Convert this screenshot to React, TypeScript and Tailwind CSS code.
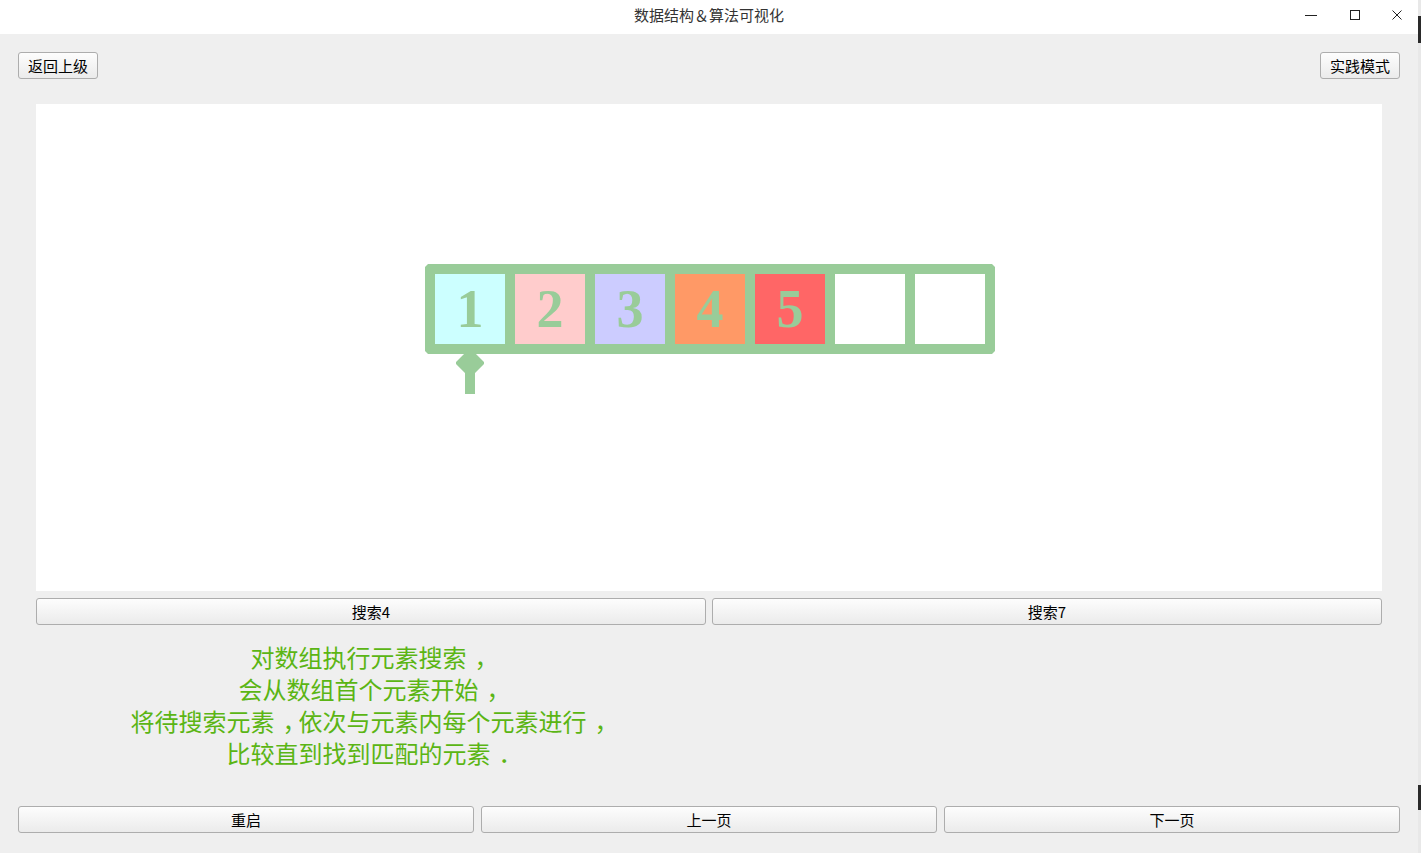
import React from "react";

const font = { fontFamily: '"Noto Sans CJK SC", "Noto Sans", sans-serif' };

function Btn({ children, className = "" }: { children: React.ReactNode; className?: string }) {
  return (
    <div
      className={
        "flex h-[27px] items-center justify-center rounded-[3px] border border-[#adadad] bg-gradient-to-b from-[#fdfdfd] to-[#ebebeb] pb-[1px] text-[15px] leading-none text-black " +
        className
      }
    >
      {children}
    </div>
  );
}

const cells = [
  { v: "1", bg: "bg-[#ccffff]" },
  { v: "2", bg: "bg-[#ffcccc]" },
  { v: "3", bg: "bg-[#ccccff]" },
  { v: "4", bg: "bg-[#ff9966]" },
  { v: "5", bg: "bg-[#ff6666]" },
  { v: "", bg: "bg-white" },
  { v: "", bg: "bg-white" },
];

function P({ c }: { c: string }) {
  return <span className="pl-[8px] pr-[4px] [font-feature-settings:'halt']">{c}</span>;
}

export default function App() {
  return (
    <div className="flex h-[853px] w-[1421px] overflow-hidden bg-[#efefef]" style={font}>
      <div className="flex h-[851px] w-[1418px] flex-col">
        {/* title bar */}
        <div className="relative flex h-[34px] items-center justify-center bg-white">
          <span className="pb-[4px] text-[15px] text-[#333]">数据结构＆算法可视化</span>
          <div className="absolute right-0 top-0 flex h-[30px] items-center">
            <div className="ml-[2px] flex w-[44px] justify-center">
              <svg width="12" height="12" viewBox="0 0 12 12">
                <line x1="0" y1="6.5" x2="12" y2="6.5" stroke="#222" strokeWidth="1" />
              </svg>
            </div>
            <div className="flex w-[43px] justify-center">
              <svg width="12" height="12" viewBox="0 0 12 12">
                <rect x="1.5" y="1.5" width="9" height="9" fill="none" stroke="#222" strokeWidth="1" />
              </svg>
            </div>
            <div className="flex w-[42px] justify-center">
              <svg width="12" height="12" viewBox="0 0 12 12">
                <line x1="1.5" y1="1.5" x2="10.5" y2="10.5" stroke="#222" strokeWidth="1" />
                <line x1="10.5" y1="1.5" x2="1.5" y2="10.5" stroke="#222" strokeWidth="1" />
              </svg>
            </div>
          </div>
        </div>

        {/* top buttons */}
        <div className="mt-[18px] flex justify-between pl-[18px] pr-[18px]">
          <Btn className="w-[80px]">返回上级</Btn>
          <Btn className="w-[80px]">实践模式</Btn>
        </div>

        {/* canvas */}
        <div className="mx-[36px] mt-[25px] h-[487px] bg-white pl-[389px] pt-[160px]">
          <div className="relative w-[570px]">
            <div
              className="flex gap-[10px] bg-[#99cc99] p-[10px]"
              style={{
                clipPath:
                  "polygon(3px 0, calc(100% - 3px) 0, 100% 3px, 100% calc(100% - 3px), calc(100% - 3px) 100%, 3px 100%, 0 calc(100% - 3px), 0 3px)",
              }}
            >
              {cells.map((c, i) => (
                <div
                  key={i}
                  className={"flex h-[70px] w-[70px] items-center justify-center " + c.bg}
                >
                  <span
                    className="text-[54px] font-bold leading-none text-[#99cc99]"
                    style={{ fontFamily: '"Liberation Serif", "Times New Roman", serif' }}
                  >
                    {c.v}
                  </span>
                </div>
              ))}
            </div>
            <svg width="40" height="42" viewBox="0 0 40 42" className="absolute left-[25px] top-[89px]">
              <polygon
                points="6,0 16,0 25,9 25,11 16,20 16,41 6,41 6,20 -3,11 -3,9"
                transform="translate(9,0)"
                fill="#99cc99"
              />
            </svg>
          </div>
        </div>

        {/* search buttons */}
        <div className="mx-[36px] mt-[7px] flex gap-[6px]">
          <Btn className="flex-1">搜索4</Btn>
          <Btn className="flex-1">搜索7</Btn>
        </div>

        {/* description */}
        <div className="ml-[36px] mt-[16px] w-[669px] text-center text-[24px] leading-[32px] text-[#5bb514]">
          <div>
            对数组执行元素搜索<P c="，" />
          </div>
          <div>
            会从数组首个元素开始<P c="，" />
          </div>
          <div>
            将待搜索元素<P c="，" />依次与元素内每个元素进行<P c="，" />
          </div>
          <div>
            比较直到找到匹配的元素<P c="．" />
          </div>
        </div>

        {/* bottom buttons */}
        <div className="mt-[37px] flex gap-[7px] pl-[18px] pr-[18px]">
          <Btn className="flex-1">重启</Btn>
          <Btn className="flex-1">上一页</Btn>
          <Btn className="flex-1">下一页</Btn>
        </div>
      </div>

      {/* right edge strip */}
      <div className="flex w-[3px] flex-col bg-[#e8e8e8]">
        <div className="h-[16px]" />
        <div className="h-[27px] bg-[#2a2a2a]" />
        <div className="h-[742px]" />
        <div className="h-[25px] bg-[#2a2a2a]" />
      </div>
    </div>
  );
}
